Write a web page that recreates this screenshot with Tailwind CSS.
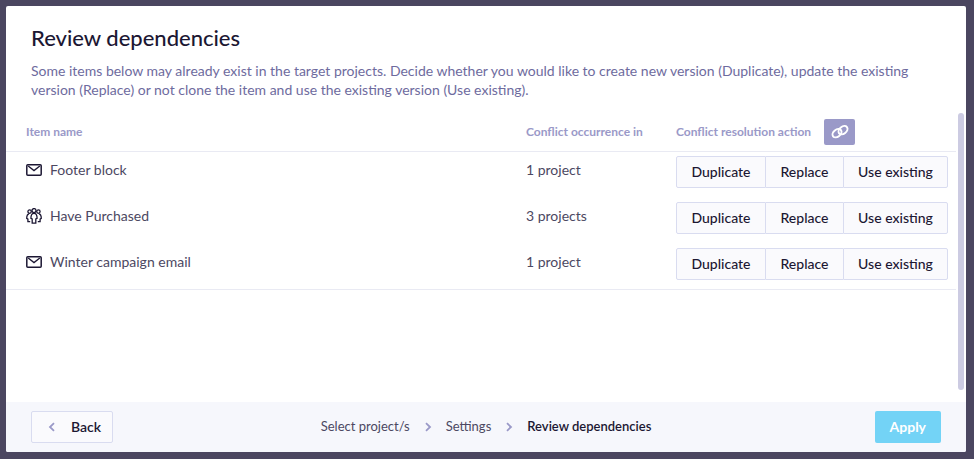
<!DOCTYPE html>
<html lang="en">
<head>
    <meta charset="UTF-8">
    <meta name="viewport" content="width=device-width, initial-scale=1.0">
    <title>Review dependencies</title>
    <!-- Tailwind CSS -->
    <script src="https://cdn.jsdelivr.net/npm/@tailwindcss/browser@4"></script>
</head>
<body class="bg-[#4b4660] font-['Lato',sans-serif] text-[#1c1733]">
    <!-- Icons used more than once -->
    <svg class="hidden">
        <symbol id="icon-mail" viewBox="0 0 16 12">
            <rect x="0.8" y="0.8" width="14.4" height="10.4" rx="1" fill="none" stroke="currentColor" stroke-width="1.5"/>
            <path d="M2.2 2 L8 6.6 L13.8 2" fill="none" stroke="currentColor" stroke-width="1.3"/>
        </symbol>
        <symbol id="icon-chevron" viewBox="0 0 8 10">
            <path d="M2 1.2 L6 5 L2 8.8" fill="none" stroke="currentColor" stroke-width="1.8"/>
        </symbol>
    </svg>

    <div class="flex h-screen pt-1.5 pl-1.5 pr-2 pb-[7px]">
        <!-- Modal -->
        <div class="flex flex-1 flex-col overflow-hidden rounded-xs bg-white">
            <!-- Header -->
            <div class="px-[25px] pt-[18px] pb-[14px]">
                <h1 class="text-[22px] leading-7 font-medium">Review dependencies</h1>
                <p class="mt-[9px] text-sm leading-[19px] text-[#6e6b9e]">Some items below may already exist in the target projects. Decide whether you would like to create new version (Duplicate), update the existing version (Replace) or not clone the item and use the existing version (Use existing).</p>
            </div>

            <!-- Dependencies list -->
            <div class="flex min-h-0 flex-1 gap-0.5 pr-0.5">
                <div class="flex-1 overflow-hidden">
                    <table class="w-full table-fixed border-separate border-spacing-0 text-left">
                        <thead>
                            <tr class="h-[39px] text-xs text-[#9a99c8]">
                                <th class="border-b border-[#e9eaf3] pl-5 font-bold">Item name</th>
                                <th class="w-[150px] border-b border-[#e9eaf3] font-bold">Conflict occurrence in</th>
                                <th class="w-[280px] border-b border-[#e9eaf3] font-bold">
                                    <div class="flex items-center gap-[13px]">
                                        <span>Conflict resolution action</span>
                                        <button type="button" aria-label="Link actions" class="flex h-[26px] w-[31px] items-center justify-center rounded-xs bg-[#9a99c8] text-white">
                                            <svg class="h-4 w-[18px]" viewBox="0 0 18 16" fill="none" stroke="currentColor" stroke-width="2">
                                                <ellipse cx="6" cy="9.2" rx="5" ry="3.5" transform="rotate(-38 6 9.2)"/>
                                                <ellipse cx="12" cy="6.2" rx="5" ry="3.5" transform="rotate(-38 12 6.2)"/>
                                            </svg>
                                        </button>
                                    </div>
                                </th>
                            </tr>
                        </thead>
                        <tbody class="text-sm leading-5 text-[#4c4862]">
                            <tr class="h-[46px] align-top">
                                <td class="pt-2 pl-5">
                                    <div class="flex items-center gap-2">
                                        <svg class="h-3 w-4 text-[#1c1733]"><use href="#icon-mail"/></svg>
                                        <span>Footer block</span>
                                    </div>
                                </td>
                                <td class="pt-2">1 project</td>
                                <td class="pt-1">
                                    <div class="flex text-[#1c1733]">
                                        <button type="button" class="h-8 w-[90px] rounded-l-xs border border-[#d9dcf0] bg-[#fafafd] font-medium">Duplicate</button>
                                        <button type="button" class="h-8 w-[77px] border-y border-[#d9dcf0] bg-[#fafafd] font-medium">Replace</button>
                                        <button type="button" class="h-8 w-[105px] rounded-r-xs border border-[#d9dcf0] bg-[#fafafd] font-medium">Use existing</button>
                                    </div>
                                </td>
                            </tr>
                            <tr class="h-[46px] align-top">
                                <td class="pt-2 pl-5">
                                    <div class="flex items-center gap-2">
                                        <svg class="h-4 w-4 text-[#1c1733]" viewBox="0 0 16 16" fill="none" stroke="currentColor" stroke-width="1.3">
                                            <circle cx="8" cy="2.6" r="2"/>
                                            <circle cx="3.6" cy="3.6" r="1.7"/>
                                            <circle cx="12.4" cy="3.6" r="1.7"/>
                                            <path d="M8 5.4 C5.6 5.4 4.9 7 4.9 10.4 L6.2 11 V15.2 H9.8 V11 L11.1 10.4 C11.1 7 10.4 5.4 8 5.4 Z"/>
                                            <path d="M3 5.8 C1.2 6.2 0.7 7.6 0.7 10.4 L1.9 11.2 V13.6 H4.2"/>
                                            <path d="M13 5.8 C14.8 6.2 15.3 7.6 15.3 10.4 L14.1 11.2 V13.6 H11.8"/>
                                        </svg>
                                        <span>Have Purchased</span>
                                    </div>
                                </td>
                                <td class="pt-2">3 projects</td>
                                <td class="pt-1">
                                    <div class="flex text-[#1c1733]">
                                        <button type="button" class="h-8 w-[90px] rounded-l-xs border border-[#d9dcf0] bg-[#fafafd] font-medium">Duplicate</button>
                                        <button type="button" class="h-8 w-[77px] border-y border-[#d9dcf0] bg-[#fafafd] font-medium">Replace</button>
                                        <button type="button" class="h-8 w-[105px] rounded-r-xs border border-[#d9dcf0] bg-[#fafafd] font-medium">Use existing</button>
                                    </div>
                                </td>
                            </tr>
                            <tr class="h-[46px] align-top">
                                <td class="border-b border-[#e9eaf3] pt-2 pl-5">
                                    <div class="flex items-center gap-2">
                                        <svg class="h-3 w-4 text-[#1c1733]"><use href="#icon-mail"/></svg>
                                        <span>Winter campaign email</span>
                                    </div>
                                </td>
                                <td class="border-b border-[#e9eaf3] pt-2">1 project</td>
                                <td class="border-b border-[#e9eaf3] pt-1">
                                    <div class="flex text-[#1c1733]">
                                        <button type="button" class="h-8 w-[90px] rounded-l-xs border border-[#d9dcf0] bg-[#fafafd] font-medium">Duplicate</button>
                                        <button type="button" class="h-8 w-[77px] border-y border-[#d9dcf0] bg-[#fafafd] font-medium">Replace</button>
                                        <button type="button" class="h-8 w-[105px] rounded-r-xs border border-[#d9dcf0] bg-[#fafafd] font-medium">Use existing</button>
                                    </div>
                                </td>
                            </tr>
                        </tbody>
                    </table>
                </div>
                <!-- Scrollbar -->
                <div class="mb-3 w-1.5 rounded-full bg-[#cccbe2]"></div>
            </div>

            <!-- Footer -->
            <div class="flex h-[50px] items-center bg-[#f6f7fc] px-[25px]">
                <div class="flex flex-1">
                    <button type="button" class="flex h-8 items-center gap-[15px] rounded-xs border border-[#d9dcf0] bg-[#fafafd] pr-[11px] pl-4 text-sm font-semibold">
                        <svg class="h-[10px] w-2 rotate-180 text-[#9a99c8]"><use href="#icon-chevron"/></svg>
                        Back
                    </button>
                </div>
                <nav class="flex items-center gap-[14px] text-[13px] text-[#4c4862]">
                    <a href="#">Select project/s</a>
                    <svg class="h-[10px] w-2 text-[#9a99c8]"><use href="#icon-chevron"/></svg>
                    <a href="#">Settings</a>
                    <svg class="h-[10px] w-2 text-[#9a99c8]"><use href="#icon-chevron"/></svg>
                    <a href="#" class="font-semibold text-[#1c1733]">Review dependencies</a>
                </nav>
                <div class="flex flex-1 justify-end">
                    <button type="button" class="h-8 rounded-xs bg-[#73d3f6] px-[15px] text-sm font-bold text-white">Apply</button>
                </div>
            </div>
        </div>
    </div>
</body>
</html>
